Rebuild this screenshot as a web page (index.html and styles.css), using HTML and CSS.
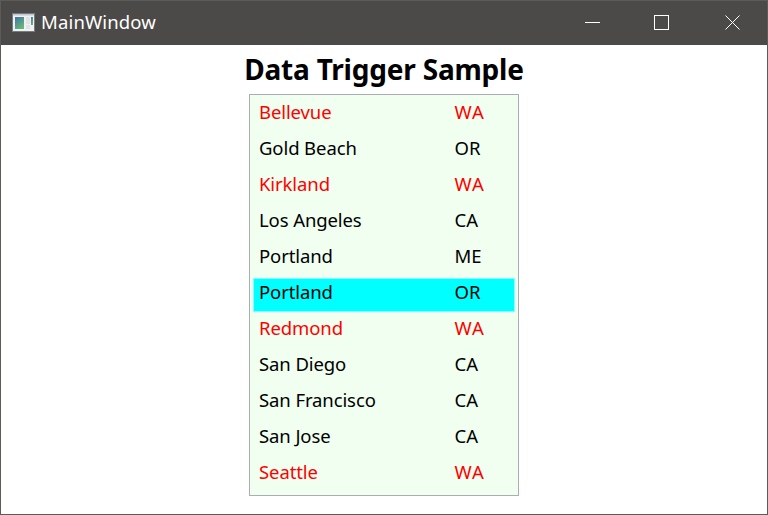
FILE: index.html
```
<!DOCTYPE html>
<html lang="en">
<head>
<meta charset="utf-8">
<title>MainWindow</title>
<link rel="stylesheet" href="styles.css">
</head>
<body>
<div class="window">
  <header class="titlebar">
    <svg class="app-icon" width="24" height="20" viewBox="0 0 24 20">
      <defs><linearGradient id="g" x1="0" y1="0" x2="0.6" y2="1"><stop offset="0" stop-color="#3f72a8"/><stop offset="1" stop-color="#66b877"/></linearGradient></defs>
      <rect x="0.5" y="0.5" width="22" height="18" fill="#f0f1f3" stroke="#777c82"/>
      <rect x="1" y="1" width="21" height="1.5" fill="#c3c8ce"/>
      <rect x="3" y="4" width="9" height="12" fill="url(#g)"/>
      <path d="M14 4h4v7h-4zM14 12h4v4h-4z" fill="#e2e3e5"/>
      <rect x="19" y="4" width="2" height="8" fill="url(#g)"/>
    </svg>
    <span class="caption">MainWindow</span>
    <svg class="controls" width="156" height="16" viewBox="0 0 156 16" fill="none" stroke="#fff">
      <path d="M0 7.5h15"/>
      <rect x="69.5" y="0.5" width="14" height="14"/>
      <path d="M140.5 0.5l14 14M154.5 0.5l-14 14"/>
    </svg>
  </header>
  <main class="content">
    <h1 class="heading">Data Trigger Sample</h1>
    <ul class="list">
      <li class="item wa"><span class="city">Bellevue</span><span class="state">WA</span></li>
      <li class="item"><span class="city">Gold Beach</span><span class="state">OR</span></li>
      <li class="item wa"><span class="city">Kirkland</span><span class="state">WA</span></li>
      <li class="item"><span class="city">Los Angeles</span><span class="state">CA</span></li>
      <li class="item"><span class="city">Portland</span><span class="state">ME</span></li>
      <li class="item selected"><span class="city">Portland</span><span class="state">OR</span></li>
      <li class="item wa"><span class="city">Redmond</span><span class="state">WA</span></li>
      <li class="item"><span class="city">San Diego</span><span class="state">CA</span></li>
      <li class="item"><span class="city">San Francisco</span><span class="state">CA</span></li>
      <li class="item"><span class="city">San Jose</span><span class="state">CA</span></li>
      <li class="item wa"><span class="city">Seattle</span><span class="state">WA</span></li>
    </ul>
  </main>
</div>
</body>
</html>
```
FILE: styles.css
```
* { box-sizing: border-box; }
body { margin: 0; font-family: "Noto Sans", "Open Sans", sans-serif; }
.window {
  width: 768px;
  height: 515px;
  border: 1px solid #5c5b59;
  background: #fff;
  overflow: hidden;
}
.titlebar {
  display: flex;
  align-items: center;
  height: 44px;
  padding: 0 26px 0 11px;
  background: #4c4a48;
  color: #fff;
}
.app-icon { margin-right: 5px; margin-top: -1px; }
.caption { font-size: 18.5px; line-height: 24px; letter-spacing: 0.15px; margin-top: -3px; }
.controls { margin-left: auto; }
.content { display: flex; flex-direction: column; align-items: center; }
.heading {
  margin: 4px 0 5px;
  font-size: 28px;
  font-weight: 700;
  line-height: 40px;
  letter-spacing: -0.2px;
  white-space: nowrap;
}
.list {
  width: 270px;
  height: 402px;
  margin: 0;
  padding: 3px;
  list-style: none;
  background: #f0fff0;
  border: 1px solid #abadb3;
}
.item {
  display: flex;
  height: 34px;
  margin-bottom: 2px;
  padding: 0 6px;
  font-size: 18.5px;
  line-height: 27px;
}
.city { width: 195px; letter-spacing: -0.1px; }
.state { padding-left: 0.5px; }
.wa { color: #f00; }
.wa .state { letter-spacing: 1px; }
.selected { background: #0ff; border: 1px solid #7fffff; padding: 0 5px; line-height: 25px; }
```
